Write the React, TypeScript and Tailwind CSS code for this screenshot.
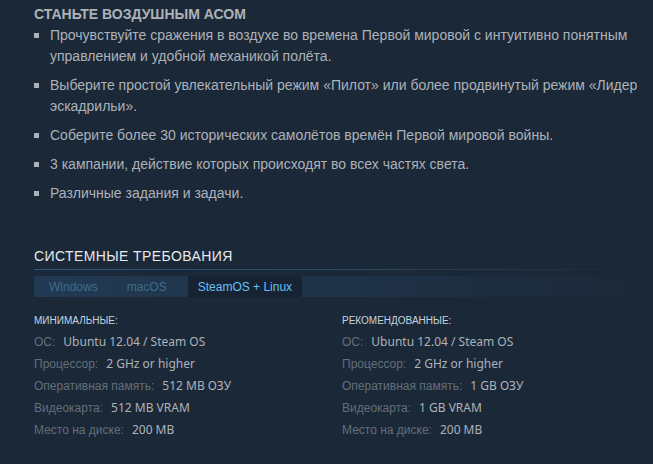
import React from "react";

const bullets = [
  "Прочувствуйте сражения в воздухе во времена Первой мировой с интуитивно понятным управлением и удобной механикой полёта.",
  "Выберите простой увлекательный режим «Пилот» или более продвинутый режим «Лидер эскадрильи».",
  "Соберите более 30 исторических самолётов времён Первой мировой войны.",
  "3 кампании, действие которых происходят во всех частях света.",
  "Различные задания и задачи.",
];

const minReq: [string, string][] = [
  ["ОС:", "Ubuntu 12.04 / Steam OS"],
  ["Процессор:", "2 GHz or higher"],
  ["Оперативная память:", "512 MB ОЗУ"],
  ["Видеокарта:", "512 MB VRAM"],
  ["Место на диске:", "200 MB"],
];
const recReq: [string, string][] = [
  ["ОС:", "Ubuntu 12.04 / Steam OS"],
  ["Процессор:", "2 GHz or higher"],
  ["Оперативная память:", "1 GB ОЗУ"],
  ["Видеокарта:", "1 GB VRAM"],
  ["Место на диске:", "200 MB"],
];

function ReqCol({ title, rows }: { title: string; rows: [string, string][] }) {
  return (
    <div className="w-[308px] flex flex-col">
      <div className="text-[10px] leading-[14px] text-[#c6d4df] uppercase font-['Liberation_Sans',sans-serif] mb-[3px]">
        {title}
      </div>
      {rows.map(([k, v]) => (
        <div key={k} className="flex items-baseline h-[22px] leading-[22px]">
          <span className="text-[12px] text-[#626f7a] font-['Liberation_Sans',sans-serif]">{k}</span>
          <span className="ml-[8px] text-[12px] text-[#acb2b8] font-['Noto_Sans',sans-serif]">{v}</span>
        </div>
      ))}
    </div>
  );
}

export default function App() {
  return (
    <div className="w-[653px] h-[464px] bg-[#1b2838] overflow-hidden font-['Liberation_Sans',Arial,sans-serif]">
      <div className="pl-[34px] pt-[6px]">
        <div className="text-[14px] leading-[17px] font-bold text-[#acb2b8] uppercase">Станьте воздушным асом</div>
        <ul className="mt-[2px] w-[606px] flex flex-col gap-[8px]">
          {bullets.map((b) => (
            <li key={b} className="flex text-[14px] leading-[21px] text-[#acb2b8]">
              <span className="w-[16px] shrink-0 flex pt-[8px]">
                <span className="block w-[5px] h-[5px] bg-[#acb2b8]" />
              </span>
              <span>{b}</span>
            </li>
          ))}
        </ul>
      </div>

      <div className="pl-[34px] mt-[43px]">
        <div className="text-[14px] leading-[18px] tracking-[0.4px] text-[#e4e9ec] uppercase">Системные требования</div>
        <div className="mt-[4px] h-[1px] bg-gradient-to-r from-[#2e5a7a] via-[#2a4a64] to-[#1b2838]" />
        <div className="mt-[6px] h-[21px] flex items-stretch pl-[5px] gap-[9px] bg-gradient-to-r from-[#213a53] via-[#1f3247] to-[#1b2838] text-[12px]">
          <div className="px-[10px] flex items-center text-[#3d6c8d]">Windows</div>
          <div className="px-[10px] flex items-center text-[#3d6c8d]">macOS</div>
          <div className="px-[10px] ml-[2px] flex items-center bg-[#172232] text-[#66c0f4]">SteamOS + Linux</div>
        </div>
        <div className="mt-[17px] flex">
          <ReqCol title="Минимальные:" rows={minReq} />
          <ReqCol title="Рекомендованные:" rows={recReq} />
        </div>
      </div>
    </div>
  );
}
